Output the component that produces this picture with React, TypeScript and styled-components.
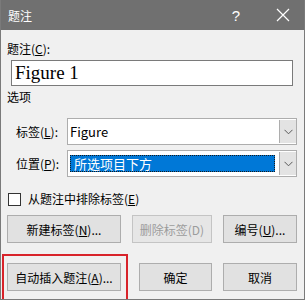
import { createGlobalStyle, styled } from "styled-components";

const GlobalStyle = createGlobalStyle`
  html, body {
    margin: 0;
    padding: 0;
    background: #f0f0f0;
  }
  body {
    font-family: "Noto Sans CJK SC", "Liberation Sans", sans-serif;
    font-size: 12px;
    color: #000;
  }
`;

const Dialog = () => {
  return (
    <Window>
      <GlobalStyle />
      <TitleBar>
        <Title>题注</Title>
        <TitleButtons>
          <HelpMark>?</HelpMark>
          <svg width="14" height="14" viewBox="0 0 14 14">
            <path d="M1 1 L13 13 M13 1 L1 13" stroke="#fff" strokeWidth="1.2" />
          </svg>
        </TitleButtons>
      </TitleBar>

      <Body>
        <FieldLabel>
          题注(<u>C</u>):
        </FieldLabel>
        <CaptionInput>Figure 1</CaptionInput>

        <SectionLabel>选项</SectionLabel>

        <OptionRow>
          <OptionLabel>
            标签(<u>L</u>):
          </OptionLabel>
          <Combo>
            <ComboText>Figure</ComboText>
            <ComboArrow>
              <Chevron />
            </ComboArrow>
          </Combo>
        </OptionRow>

        <OptionRow $gap={5}>
          <OptionLabel>
            位置(<u>P</u>):
          </OptionLabel>
          <Combo>
            <ComboText>
              <Selected>所选项目下方</Selected>
            </ComboText>
            <ComboArrow>
              <Chevron />
            </ComboArrow>
          </Combo>
        </OptionRow>

        <CheckRow>
          <CheckBox />
          <span>
            从题注中排除标签(<u>E</u>)
          </span>
        </CheckRow>

        <ButtonRow>
          <Button $width={114}>
            新建标签(<u>N</u>)...
          </Button>
          <Button $width={80} $left={11} disabled>
            删除标签(D)
          </Button>
          <Button $width={74} $left={11}>
            编号(<u>U</u>)...
          </Button>
        </ButtonRow>

        <ButtonRow $top={20}>
          <Marked>
            <Button $width={114}>
              自动插入题注(<u>A</u>)...
            </Button>
            <RedFrame />
          </Marked>
          <Button $width={73} $left={18}>
            确定
          </Button>
          <Button $width={74} $left={11}>
            取消
          </Button>
        </ButtonRow>
      </Body>
    </Window>
  );
};

const Chevron = () => (
  <svg width="9" height="6" viewBox="0 0 9 6">
    <path d="M0.5 0.8 L4.5 4.8 L8.5 0.8" stroke="#5a5a5a" strokeWidth="1" fill="none" />
  </svg>
);

const Window = styled.div`
  box-sizing: border-box;
  width: 305px;
  height: 300px;
  background: #f0f0f0;
  border: 1px solid #7a7a7a;
  border-top: none;
  display: flex;
  flex-direction: column;
  overflow: hidden;
`;

const TitleBar = styled.div`
  height: 30px;
  margin: 0 -1px;
  background: #707070;
  display: flex;
  align-items: center;
  justify-content: space-between;
  padding: 0 15px 0 8px;
  color: #fff;
`;

const Title = styled.span`
  font-size: 12px;
`;

const TitleButtons = styled.div`
  display: flex;
  align-items: center;
  gap: 36px;
`;

const HelpMark = styled.span`
  font-family: "Liberation Sans", sans-serif;
  font-size: 15px;
`;

const Body = styled.div`
  display: flex;
  flex-direction: column;
  padding: 10px 6px 0 6px;
  position: relative;
`;

const FieldLabel = styled.div`
  line-height: 17px;
`;

const CaptionInput = styled.div`
  box-sizing: border-box;
  margin: 3px 0 0 4px;
  width: 282px;
  height: 26px;
  background: #fff;
  border: 1px solid #7a7a7a;
  font-family: "Liberation Serif", serif;
  font-size: 19px;
  line-height: 24px;
  padding-left: 3px;
`;

const SectionLabel = styled.div`
  margin-top: 3px;
  line-height: 16px;
`;

const OptionRow = styled.div<{ $gap?: number }>`
  display: flex;
  align-items: center;
  margin-top: ${(p) => p.$gap ?? 13}px;
  padding-left: 9px;
`;

const OptionLabel = styled.div`
  width: 51px;
`;

const Combo = styled.div`
  box-sizing: border-box;
  width: 230px;
  height: 27px;
  display: flex;
  background: #fff;
  border: 1px solid #adadad;
`;

const ComboText = styled.div`
  flex: 1;
  display: flex;
  align-items: center;
  padding: 2px;
  font-size: 13px;
  & > :first-child {
    padding-left: 4px;
  }
`;

const Selected = styled.div`
  flex: 1;
  align-self: stretch;
  display: flex;
  align-items: center;
  background: #0078d7;
  color: #fff;
  outline: 1px dotted #1a1a1a;
  outline-offset: -1px;
  margin: 2px 2px 2px 0;
`;

const ComboArrow = styled.div`
  width: 16px;
  margin: 1px 0 1px 0;
  background: #e3e3e3;
  border-left: 1px solid #adadad;
  display: flex;
  align-items: center;
  justify-content: center;
`;

const CheckRow = styled.div`
  display: flex;
  align-items: center;
  gap: 7px;
  margin-top: 14px;
  padding-left: 1px;
  line-height: 16px;
`;

const CheckBox = styled.span`
  box-sizing: border-box;
  width: 13px;
  height: 13px;
  background: #fff;
  border: 1px solid #333;
`;

const ButtonRow = styled.div<{ $top?: number }>`
  display: flex;
  margin-top: ${(p) => p.$top ?? 8}px;
`;

const Button = styled.button<{ $width: number; $left?: number }>`
  box-sizing: border-box;
  width: ${(p) => p.$width}px;
  height: 28px;
  margin-left: ${(p) => p.$left ?? 0}px;
  background: #e1e1e1;
  border: 1px solid #adadad;
  border-radius: 0;
  font-family: "Noto Sans CJK SC", "Liberation Sans", sans-serif;
  font-size: 12px;
  color: #000;
  padding: 0;

  &:disabled {
    background: #e6e6e6;
    border-color: #c4c4c4;
    color: #9c9c9c;
  }
`;

const Marked = styled.div`
  position: relative;
  display: flex;
`;

const RedFrame = styled.div`
  position: absolute;
  left: -5px;
  top: -9px;
  right: -7px;
  bottom: -10px;
  border: 2px solid #d8232a;
  pointer-events: none;
`;

export default Dialog;
